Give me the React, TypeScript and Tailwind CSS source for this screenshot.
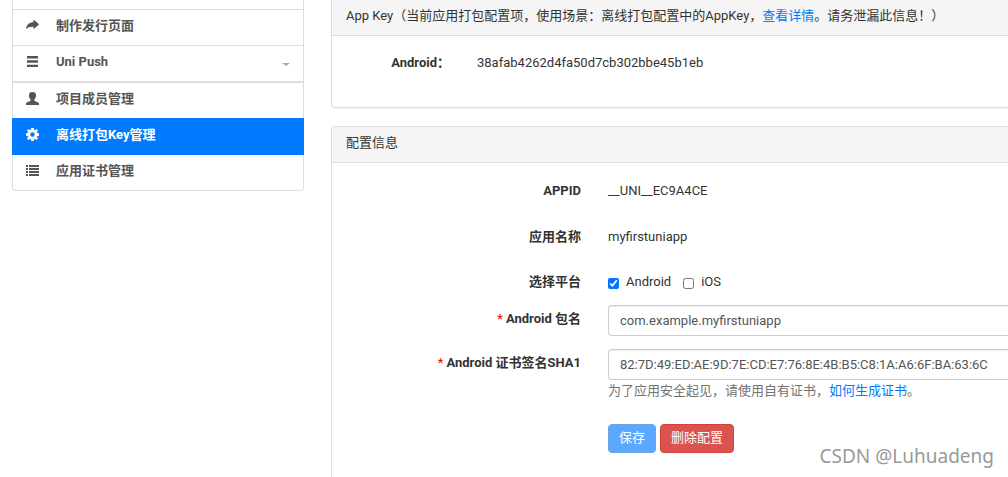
import { useState, type ReactNode } from 'react';

type IconName = 'share' | 'menu' | 'user' | 'cog' | 'list';

interface NavItem {
  label: string;
  icon: IconName;
  active?: boolean;
  dropdown?: boolean;
}

const navItems: NavItem[] = [
  { label: '制作发行页面', icon: 'share' },
  { label: 'Uni Push', icon: 'menu', dropdown: true },
  { label: '项目成员管理', icon: 'user' },
  { label: '离线打包Key管理', icon: 'cog', active: true },
  { label: '应用证书管理', icon: 'list' },
];

const iconPaths: Record<IconName, ReactNode> = {
  share: <path d="M7.500 .5 13.200 5.400 7.500 10.300V7.700C4 7.600 2 8.300 0 10.200.500 6 3.200 3.400 7.500 3.100Z" />,
  menu: <path d="M1 1h11v2.400H1zM1 5.200h11v2.600H1zM1 9.700h11v2.300H1z" />,
  user: (
    <path d="M6.500 0C9.300 0 10.300 1.600 10 4 9.900 5.500 9.200 6.800 8.400 7.500V8.400C8.600 9.400 12.400 9.600 13 11.400V13H0V11.400C.6 9.600 4.400 9.400 4.600 8.400V7.500C3.800 6.800 3.100 5.500 3 4 2.700 1.600 3.700 0 6.500 0Z" />
  ),
  cog: (
    <path
      fillRule="evenodd"
      d="M5.200 0h2.600l.3 1.700 1 .4L10.600 1.100 12 2.500 10.900 4l.4 1 1.700.3v2.500l-1.700.3-.4 1 1.100 1.500L10.600 12 9.100 10.900l-1 .4L7.800 13H5.200L4.900 11.300l-1-.4L2.400 12 1 10.600 2.100 9.100l-.4-1L0 7.800V5.300L1.700 5l.4-1L1 2.500 2.400 1.100 3.900 2.100l1-.4ZM6.500 4.300a2.200 2.200 0 1 0 0 4.400 2.200 2.200 0 0 0 0-4.400Z"
    />
  ),
  list: (
    <path d="M0 1h2v2H0zM3 1h10v2H3zM0 4h2v2H0zM3 4h10v2H3zM0 7h2v2H0zM3 7h10v2H3zM0 10h2v2H0zM3 10h10v2H3z" />
  ),
};

function Icon({ name }: { name: IconName }) {
  return (
    <svg viewBox="0 0 13 13" className="mt-[2px] h-[13px] w-[13px] shrink-0 fill-current" aria-hidden="true">
      {iconPaths[name]}
    </svg>
  );
}

function Sidebar() {
  return (
    <nav className="w-[292px] shrink-0">
      <ul className="rounded-b border border-t-0 border-[#ddd] pt-[9px]">
        {navItems.map((item) => (
          <li
            key={item.label}
            className={
              item.active
                ? '-mx-px bg-[#007bff] px-px py-px text-white'
                : item.dropdown
                  ? 'border-y border-[#ddd] text-[#555]'
                  : item.icon === 'list'
                    ? 'text-[#555]'
                    : 'border-t border-[#ddd] text-[#555]'
            }
          >
            <a href="#" className="flex h-[35px] items-start px-[13px] pt-[7px] font-bold">
              <Icon name={item.icon} />
              <span className="ml-[17px] flex-1">{item.label}</span>
              {item.dropdown && (
                <span className="mt-[10px] border-x-[4px] border-t-[3px] border-x-transparent border-t-[#aaa]" />
              )}
            </a>
          </li>
        ))}
      </ul>
    </nav>
  );
}

const labelClass = 'w-[249px] shrink-0 text-right font-bold';
const inputClass =
  'block h-[31px] w-full rounded-l border border-r-0 border-[#ccc] pb-px pl-[11px] text-[#555] shadow-[inset_0_1px_1px_rgba(0,0,0,0.075)] outline-none';

function Required() {
  return <span className="font-normal text-[#f00]">*</span>;
}

function AppKeyPanel() {
  return (
    <section className="rounded-bl border border-t-0 border-r-0 border-[#ddd] shadow-[0_1px_1px_rgba(0,0,0,0.05)]">
      <h2 className="h-9 border-b border-[#ddd] bg-[#f5f5f5] px-[14px] pt-[7px] whitespace-nowrap">
        App Key（当前应用打包配置项，使用场景：离线打包配置中的AppKey，
        <a href="#" className="text-[#007bff]">查看详情</a>。请务泄漏此信息！）
      </h2>
      <dl className="flex gap-[27px] pt-[18px] pb-[35px]">
        <dt className="w-[118px] shrink-0 text-right font-bold">Android：</dt>
        <dd>38afab4262d4fa50d7cb302bbe45b1eb</dd>
      </dl>
    </section>
  );
}

function ConfigPanel() {
  const [android, setAndroid] = useState(true);
  const [ios, setIos] = useState(false);
  const [packageName, setPackageName] = useState('com.example.myfirstuniapp');
  const [sha1, setSha1] = useState('82:7D:49:ED:AE:9D:7E:CD:E7:76:8E:4B:B5:C8:1A:A6:6F:BA:63:6C');

  return (
    <section className="mt-[18px] flex-1 rounded-tl border border-r-0 border-b-0 border-[#ddd]">
      <h2 className="h-9 border-b border-[#ddd] bg-[#f5f5f5] px-[14px] pt-[7px]">配置信息</h2>
      <form className="pt-[19px] pb-6" onSubmit={(e) => e.preventDefault()}>
        <div className="mb-7 flex gap-[27px]">
          <span className={labelClass}>APPID</span>
          <span>__UNI__EC9A4CE</span>
        </div>
        <div className="mb-[27px] flex gap-[27px]">
          <span className={labelClass}>应用名称</span>
          <span>myfirstuniapp</span>
        </div>
        <div className="mb-[14px] flex gap-[27px]">
          <span className={labelClass}>选择平台</span>
          <div className="flex gap-3">
            <label className="flex items-center gap-[7px]">
              <input
                type="checkbox"
                className="mt-[3px] h-[11px] w-[11px] accent-[#0075ff]"
                checked={android}
                onChange={(e) => setAndroid(e.target.checked)}
              />
              Android
            </label>
            <label className="flex items-center gap-[7px]">
              <input
                type="checkbox"
                className="mt-[3px] h-[11px] w-[11px] accent-[#0075ff]"
                checked={ios}
                onChange={(e) => setIos(e.target.checked)}
              />
              iOS
            </label>
          </div>
        </div>
        <div className="mb-[13px] flex gap-[27px]">
          <label htmlFor="package" className={`${labelClass} pt-[5px]`}>
            <Required /> Android 包名
          </label>
          <div className="min-w-0 flex-1">
            <input
              id="package"
              type="text"
              className={inputClass}
              value={packageName}
              onChange={(e) => setPackageName(e.target.value)}
            />
          </div>
        </div>
        <div className="mb-6 flex gap-[27px]">
          <label htmlFor="sha1" className={`${labelClass} pt-[5px]`}>
            <Required /> Android 证书签名SHA1
          </label>
          <div className="min-w-0 flex-1">
            <input
              id="sha1"
              type="text"
              className={inputClass}
              value={sha1}
              onChange={(e) => setSha1(e.target.value)}
            />
            <p className="pt-[2px] text-[#737373]">
              为了应用安全起见，请使用自有证书，
              <a href="#" className="text-[#007bff]">如何生成证书</a>。
            </p>
          </div>
        </div>
        <div className="ml-[276px] flex gap-1">
          <button type="submit" className="h-[29px] rounded border border-[#6aa5dd] bg-[#5aa8ff] px-[10px] pb-px text-white">
            保存
          </button>
          <button type="button" className="h-[29px] rounded border border-[#d43f3a] bg-[#d9534f] px-[10px] pb-px text-white">
            删除配置
          </button>
        </div>
      </form>
    </section>
  );
}

export default function App() {
  return (
    <div className="relative flex min-h-screen overflow-hidden bg-white pl-3 font-['Roboto','Noto_Sans_CJK_SC',sans-serif] text-[13px] leading-[18px] text-[#333]">
      <Sidebar />
      <main className="ml-[27px] flex min-w-0 flex-1 flex-col">
        <AppKeyPanel />
        <ConfigPanel />
      </main>
      <p className="pointer-events-none absolute right-[14px] bottom-[9px] font-['Noto_Sans',sans-serif] text-[19px] leading-6 text-[#999]">
        CSDN @Luhuadeng
      </p>
    </div>
  );
}
